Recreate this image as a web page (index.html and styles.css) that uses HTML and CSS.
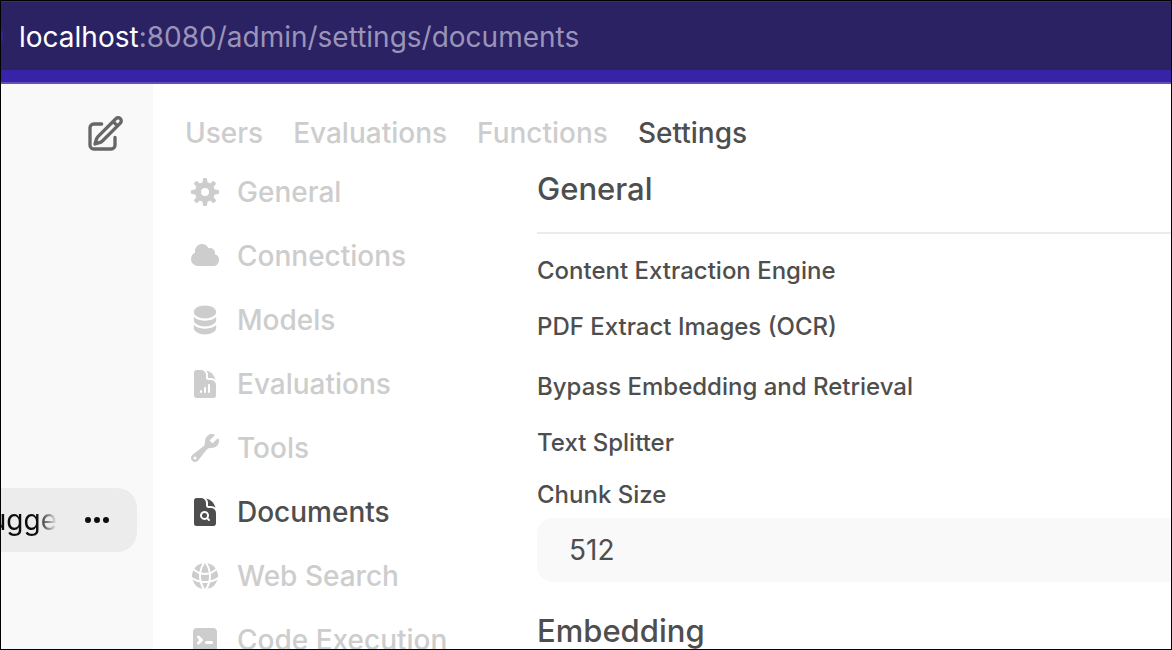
FILE: index.html
```html
<!DOCTYPE html>
<html lang="en">
<head>
<meta charset="utf-8">
<meta name="viewport" content="width=device-width, initial-scale=1">
<title>Document settings</title>
<link rel="stylesheet" href="styles.css">
</head>
<body>
<div class="window">
  <header class="address-bar"><p class="url"><span class="url-host">localhost</span>:8080/admin/settings/documents</p></header>
  <div class="app">
    <aside class="sidebar">
      <button class="icon-button new-chat" type="button" aria-label="New chat">
        <svg class="icon-large" viewBox="0 0 24 24" fill="none" stroke="currentColor" stroke-width="2" stroke-linecap="round" stroke-linejoin="round"><path d="m16.862 4.487 1.687-1.688a1.875 1.875 0 1 1 2.652 2.652L10.582 16.07a4.5 4.5 0 0 1-1.897 1.13L6 18l.8-2.685a4.5 4.5 0 0 1 1.13-1.897l8.932-8.931Zm0 0L19.5 7.125M18 14v4.75A2.25 2.25 0 0 1 15.75 21H5.25A2.25 2.25 0 0 1 3 18.75V8.25A2.25 2.25 0 0 1 5.25 6H10"/></svg>
      </button>
      <div class="chat-item">
        <span class="chat-title">Sugge</span>
        <button class="icon-button" type="button" aria-label="Chat menu">
          <svg class="icon" viewBox="0 0 16 16" fill="currentColor"><path d="M2 8a1.5 1.5 0 1 1 3 0 1.5 1.5 0 0 1-3 0ZM6.5 8a1.5 1.5 0 1 1 3 0 1.5 1.5 0 0 1-3 0ZM12.5 6.5a1.5 1.5 0 1 0 0 3 1.5 1.5 0 0 0 0-3Z"/></svg>
        </button>
      </div>
    </aside>
    <main class="main">
      <nav class="tabs" aria-label="Admin">
        <a href="#users">Users</a>
        <a href="#evaluations">Evaluations</a>
        <a href="#functions">Functions</a>
        <a class="active" href="#settings" aria-current="page">Settings</a>
      </nav>
      <div class="settings">
        <nav class="sections" aria-label="Settings">
          <a href="#general"><svg class="icon" viewBox="0 0 16 16" fill="currentColor"><path fill-rule="evenodd" d="M6.955 1.45A.5.5 0 0 1 7.452 1h1.096a.5.5 0 0 1 .497.45l.17 1.699c.484.12.94.312 1.356.562l1.321-1.081a.5.5 0 0 1 .67.033l.774.775a.5.5 0 0 1 .034.67l-1.08 1.32c.25.417.44.873.561 1.357l1.699.17a.5.5 0 0 1 .45.497v1.096a.5.5 0 0 1-.45.497l-1.699.17c-.12.484-.312.94-.562 1.356l1.082 1.322a.5.5 0 0 1-.034.67l-.774.774a.5.5 0 0 1-.67.033l-1.322-1.08c-.416.25-.872.44-1.356.561l-.17 1.699a.5.5 0 0 1-.497.45H7.452a.5.5 0 0 1-.497-.45l-.17-1.699a4.973 4.973 0 0 1-1.356-.562L4.108 13.37a.5.5 0 0 1-.67-.033l-.774-.775a.5.5 0 0 1-.034-.67l1.08-1.32a4.971 4.971 0 0 1-.561-1.357l-1.699-.17A.5.5 0 0 1 1 8.548V7.452a.5.5 0 0 1 .45-.497l1.699-.17c.12-.484.312-.94.562-1.356L2.629 4.107a.5.5 0 0 1 .034-.67l.774-.774a.5.5 0 0 1 .67-.033L5.43 3.71a4.97 4.97 0 0 1 1.356-.561l.17-1.699ZM6 8a2 2 0 1 0 4 0 2 2 0 0 0-4 0Z"/></svg>General</a>
          <a href="#connections"><svg class="icon" viewBox="0 0 16 16" fill="currentColor"><path d="M1 9.5A3.5 3.5 0 0 0 4.5 13H12a3 3 0 0 0 .917-5.857 2.503 2.503 0 0 0-3.198-3.019 3.5 3.5 0 0 0-6.628 2.171A3.5 3.5 0 0 0 1 9.5Z"/></svg>Connections</a>
          <a href="#models"><svg class="icon" viewBox="0 0 20 20" fill="currentColor"><path d="M10 1c3.866 0 7 1.79 7 4s-3.134 4-7 4-7-1.79-7-4 3.134-4 7-4zm5.694 8.13c.464-.264.91-.583 1.306-.952V10c0 2.21-3.134 4-7 4s-7-1.79-7-4V8.178c.396.37.842.688 1.306.953C5.838 10.006 7.854 10.5 10 10.5s4.162-.494 5.694-1.37zM3 13.179V15c0 2.21 3.134 4 7 4s7-1.79 7-4v-1.822c-.396.37-.842.688-1.306.953-1.532.875-3.548 1.369-5.694 1.369s-4.162-.494-5.694-1.37A7.009 7.009 0 013 13.179z"/></svg>Models</a>
          <a href="#evaluation-settings"><svg class="icon" viewBox="0 0 24 24" fill="currentColor"><path fill-rule="evenodd" d="M5.625 1.5c-1.036 0-1.875.84-1.875 1.875v17.25c0 1.035.84 1.875 1.875 1.875h12.75c1.035 0 1.875-.84 1.875-1.875V12.75A3.75 3.75 0 0 0 16.5 9h-1.875a1.875 1.875 0 0 1-1.875-1.875V5.25A3.75 3.75 0 0 0 9 1.5H5.625ZM9.75 17.25a.75.75 0 0 0-1.5 0V18a.75.75 0 0 0 1.5 0v-.75Zm2.25-3a.75.75 0 0 1 .75.75v3a.75.75 0 0 1-1.5 0v-3a.75.75 0 0 1 .75-.75Zm3.75-1.5a.75.75 0 0 0-1.5 0V18a.75.75 0 0 0 1.5 0v-5.25Z"/><path d="M14.25 5.25a5.23 5.23 0 0 0-1.279-3.434 9.768 9.768 0 0 1 6.963 6.963A5.23 5.23 0 0 0 16.5 7.5h-1.875a.375.375 0 0 1-.375-.375V5.25Z"/></svg>Evaluations</a>
          <a href="#tools"><svg class="icon" viewBox="0 0 16 16" fill="currentColor"><path fill-rule="evenodd" d="M11.5 8a3.5 3.5 0 0 0 3.362-4.476c-.094-.325-.497-.39-.736-.15L12.099 5.4a.48.48 0 0 1-.653.033 8.554 8.554 0 0 1-.879-.879.48.48 0 0 1 .033-.653l2.027-2.028c.24-.239.175-.642-.15-.736a3.502 3.502 0 0 0-4.476 3.427c.018.99-.133 2.093-.914 2.7l-5.31 4.13a2.015 2.015 0 1 0 2.828 2.827l4.13-5.309c.607-.78 1.71-.932 2.7-.914L11.5 8ZM3 13.75a.75.75 0 1 0 0-1.5.75.75 0 0 0 0 1.5Z"/></svg>Tools</a>
          <a class="active" href="#documents" aria-current="page"><svg class="icon" viewBox="0 0 24 24" fill="currentColor"><path d="M11.625 16.5a1.875 1.875 0 1 0 0-3.75 1.875 1.875 0 0 0 0 3.75Z"/><path fill-rule="evenodd" d="M5.625 1.5H9a3.75 3.75 0 0 1 3.75 3.75v1.875c0 1.036.84 1.875 1.875 1.875H16.5a3.75 3.75 0 0 1 3.75 3.75v7.875c0 1.035-.84 1.875-1.875 1.875H5.625a1.875 1.875 0 0 1-1.875-1.875V3.375c0-1.036.84-1.875 1.875-1.875Zm6 16.5c.66 0 1.277-.19 1.797-.518l1.048 1.048a.75.75 0 0 0 1.06-1.06l-1.047-1.048A3.375 3.375 0 1 0 11.625 18Z"/><path d="M14.25 5.25a5.23 5.23 0 0 0-1.279-3.434 9.768 9.768 0 0 1 6.963 6.963A5.23 5.23 0 0 0 16.5 7.5h-1.875a.375.375 0 0 1-.375-.375V5.25Z"/></svg>Documents</a>
          <a href="#web-search"><svg class="icon" viewBox="0 0 24 24" fill="currentColor"><path d="M21.721 12.752a9.711 9.711 0 0 0-.945-5.003 12.754 12.754 0 0 1-4.339 2.708 18.991 18.991 0 0 1-.214 4.772 17.165 17.165 0 0 0 5.498-2.477ZM14.634 15.55a17.324 17.324 0 0 0 .332-4.647c-.952.227-1.945.347-2.966.347-1.021 0-2.014-.12-2.966-.347a17.515 17.515 0 0 0 .332 4.647 17.385 17.385 0 0 0 5.268 0ZM9.772 17.119a18.963 18.963 0 0 0 4.456 0A17.182 17.182 0 0 1 12 21.724a17.18 17.18 0 0 1-2.228-4.605ZM7.777 15.23a18.87 18.87 0 0 1-.214-4.774 12.753 12.753 0 0 1-4.34-2.708 9.711 9.711 0 0 0-.944 5.004 17.165 17.165 0 0 0 5.498 2.477ZM21.356 14.752a9.765 9.765 0 0 1-7.478 6.817 18.64 18.64 0 0 0 1.988-4.718 18.627 18.627 0 0 0 5.49-2.098ZM2.644 14.752c1.682.971 3.53 1.688 5.49 2.099a18.64 18.64 0 0 0 1.988 4.718 9.765 9.765 0 0 1-7.478-6.816ZM13.878 2.43a9.755 9.755 0 0 1 6.116 3.986 11.267 11.267 0 0 1-3.746 2.504 18.63 18.63 0 0 0-2.37-6.49ZM12 2.276a17.152 17.152 0 0 1 2.805 7.121c-.897.23-1.837.353-2.805.353-.968 0-1.908-.122-2.805-.353A17.151 17.151 0 0 1 12 2.276ZM10.122 2.43a18.629 18.629 0 0 0-2.37 6.49 11.266 11.266 0 0 1-3.746-2.504 9.754 9.754 0 0 1 6.116-3.985Z"/></svg>Web Search</a>
          <a href="#code-execution"><svg class="icon" viewBox="0 0 16 16" fill="currentColor"><path fill-rule="evenodd" d="M2 4a2 2 0 0 1 2-2h8a2 2 0 0 1 2 2v8a2 2 0 0 1-2 2H4a2 2 0 0 1-2-2V4Zm2.22 1.97a.75.75 0 0 0 0 1.06l.97.97-.97.97a.75.75 0 1 0 1.06 1.06l1.5-1.5a.75.75 0 0 0 0-1.06l-1.5-1.5a.75.75 0 0 0-1.06 0ZM8.75 8.5a.75.75 0 0 0 0 1.5h2.5a.75.75 0 0 0 0-1.5h-2.5Z"/></svg>Code Execution</a>
        </nav>
        <form class="panel">
          <h2>General</h2>
          <hr>
          <div class="fields">
            <div class="field">Content Extraction Engine</div>
            <div class="field">PDF Extract Images (OCR)</div>
          </div>
          <div class="fields">
            <div class="field">Bypass Embedding and Retrieval</div>
            <div class="field">Text Splitter</div>
          </div>
          <div class="chunk">
            <label for="chunk-size">Chunk Size</label>
            <input id="chunk-size" type="text" inputmode="numeric" value="512">
          </div>
          <h2>Embedding</h2>
        </form>
      </div>
    </main>
  </div>
</div>
</body>
</html>
```
FILE: styles.css
```css
* {
  box-sizing: border-box;
}

body {
  margin: 0;
  font-family: Inter, "Liberation Sans", sans-serif;
  font-size: 28px;
  font-weight: 500;
  line-height: 40px;
  color: #4e4e4e;
}

a {
  color: inherit;
  text-decoration: none;
}

h2,
p {
  margin: 0;
}

.window {
  display: flex;
  flex-direction: column;
  height: 100vh;
  overflow: hidden;
  border: 1px solid #000;
  background: #fff;
}

.address-bar {
  position: relative;
  flex: none;
  padding: 15px 18px 13px;
  border-top: 1px solid #3623a7;
  border-bottom: 12px solid #3623a7;
  background: #2b2264;
  box-shadow: 0 2px #6451b8;
  color: #9b94b9;
  font-weight: 400;
}

.address-bar::before {
  content: "";
  position: absolute;
  left: -30px;
  top: 18px;
  width: 32px;
  height: 32px;
  border-radius: 50%;
  background: #3623a7;
}

.url {
  white-space: nowrap;
}

.url-host {
  color: #fff;
}

.app {
  display: flex;
  flex: 1;
  min-height: 0;
  padding-top: 2px;
}

.sidebar {
  display: flex;
  flex-direction: column;
  justify-content: space-between;
  flex: none;
  width: 152px;
  padding: 30px 16px 97px 0;
  background: #f9f9f9;
}

.icon-button {
  display: flex;
  padding: 0;
  border: 0;
  background: none;
  color: #0d0d0d;
}

.new-chat {
  align-self: flex-end;
  margin-right: 12px;
  color: #676767;
}

.icon {
  flex: none;
  width: 32px;
  height: 32px;
}

.icon-large {
  width: 40px;
  height: 40px;
}

.chat-item {
  display: flex;
  align-items: center;
  justify-content: flex-end;
  gap: 24px;
  height: 64px;
  padding-right: 24px;
  overflow: hidden;
  border-radius: 0 20px 20px 0;
  background: #ececec;
  color: #0d0d0d;
}

.chat-title {
  font-weight: 400;
  -webkit-mask-image: linear-gradient(to left, transparent, #000 20px);
  mask-image: linear-gradient(to left, transparent, #000 20px);
}

.main {
  flex: 1;
  min-width: 0;
  padding: 29px 0 0 32px;
}

.tabs {
  display: flex;
  gap: 30px;
}

.tabs a,
.sections a {
  color: #cdcdcd;
}

.tabs .active,
.sections .active {
  color: #4e4e4e;
}

.settings {
  display: flex;
  padding-top: 11px;
}

.sections {
  display: flex;
  flex-direction: column;
  gap: 24px;
  flex: none;
  width: 352px;
  padding: 8px 4px;
}

.sections a {
  display: flex;
  align-items: center;
  gap: 16px;
}

.panel {
  flex: 1;
  min-width: 0;
}

.panel h2 {
  font-size: 31px;
  font-weight: 550;
  line-height: 50px;
}

.panel hr {
  height: 2px;
  margin: 18px 0 21px;
  border: 0;
  background: #ebebeb;
}

.fields {
  display: flex;
  flex-direction: column;
  gap: 24px;
  margin-bottom: 28px;
  font-size: 24px;
  font-weight: 550;
  line-height: 32px;
}

.chunk {
  display: flex;
  flex-direction: column;
  gap: 7px;
  margin: -8px 0 24px;
  font-size: 24px;
  font-weight: 550;
  line-height: 32px;
}

.chunk input {
  width: 100%;
  height: 64px;
  padding: 0 32px;
  border: 0;
  border-radius: 16px 0 0 16px;
  background: #f9f9f9;
  color: inherit;
  font-family: inherit;
  font-size: 28px;
  font-weight: 400;
}
```
